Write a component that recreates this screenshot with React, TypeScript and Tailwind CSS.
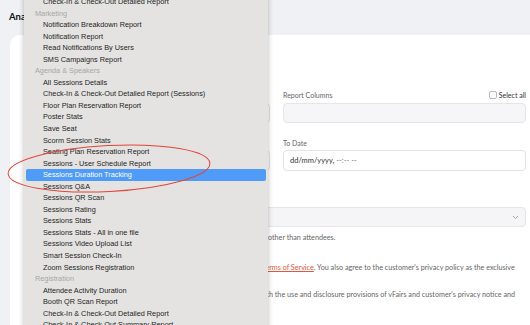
import React from "react";

type MenuRow = { label: string; header?: boolean; selected?: boolean };

const MENU_ROWS: MenuRow[] = [
  { label: "Check-In & Check-Out Detailed Report" },
  { label: "Marketing", header: true },
  { label: "Notification Breakdown Report" },
  { label: "Notification Report" },
  { label: "Read Notifications By Users" },
  { label: "SMS Campaigns Report" },
  { label: "Agenda & Speakers", header: true },
  { label: "All Sessions Details" },
  { label: "Check-In & Check-Out Detailed Report (Sessions)" },
  { label: "Floor Plan Reservation Report" },
  { label: "Poster Stats" },
  { label: "Save Seat" },
  { label: "Scorm Session Stats" },
  { label: "Seating Plan Reservation Report" },
  { label: "Sessions - User Schedule Report" },
  { label: "Sessions Duration Tracking", selected: true },
  { label: "Sessions Q&A" },
  { label: "Sessions QR Scan" },
  { label: "Sessions Rating" },
  { label: "Sessions Stats" },
  { label: "Sessions Stats - All in one file" },
  { label: "Sessions Video Upload List" },
  { label: "Smart Session Check-In" },
  { label: "Zoom Sessions Registration" },
  { label: "Registration", header: true },
  { label: "Attendee Activity Duration" },
  { label: "Booth QR Scan Report" },
  { label: "Check-In & Check-Out Detailed Report" },
  { label: "Check-In & Check-Out Summary Report" },
];

// native select popup, open over the form
function ReportMenu() {
  return (
    <div className="absolute left-[24px] top-[-4px] w-[244px] h-[340px] bg-[#e4e3e1] shadow-[0_0_5px_rgba(0,0,0,0.28)] font-['Liberation_Sans',sans-serif] text-[7.3px]">
      {MENU_ROWS.map((row, i) =>
        row.header ? (
          <div key={i} className="h-[11.55px] leading-[11.55px] pl-[11px] text-[#a7a7a5]">
            {row.label}
          </div>
        ) : (
          <div
            key={i}
            className={
              "h-[11.55px] leading-[11.55px] whitespace-nowrap " +
              (row.selected
                ? "mx-[2px] pl-[17px] rounded-[2px] bg-[#4f9bf7] text-white"
                : "pl-[19px] text-[#1f1f1f]")
            }
          >
            {row.label}
          </div>
        )
      )}
    </div>
  );
}

export default function App() {
  return (
    <div className="relative w-[530px] h-[325px] overflow-hidden bg-[#f0f1f4] font-['Lato',sans-serif]">
      <div className="h-[35px] pl-[9px] flex items-center">
        <h1 className="text-[9.5px] font-bold text-[#111]">Analytics</h1>
      </div>

      <div className="ml-[10px] h-[290px] rounded-tl-[10px] bg-white pl-[20px] pt-[55px]">
        <div className="grid grid-cols-[240px_243px] gap-x-[13px]">
          <div>
            <div className="h-[10px]" />
            <div className="mt-[3px] h-[20px] rounded-[4px] border border-[#e3e3e6] bg-white" />
          </div>
          <div>
            <div className="flex h-[10px] items-center justify-between text-[7px] leading-[10px]">
              <span className="text-[#666]">Report Columns</span>
              <label className="flex items-center gap-[2px] text-[#333]">
                <span className="h-[8px] w-[8px] rounded-[2px] border border-[#b9b9bd] bg-white" />
                Select all
              </label>
            </div>
            <div className="mt-[3px] h-[20px] rounded-[4px] border border-[#e6e6ea] bg-[#f6f6f8]" />
          </div>

          <div className="mt-[15px]">
            <div className="h-[10px]" />
            <div className="mt-[2px] h-[21px] rounded-[4px] border border-[#e3e3e6] bg-white" />
          </div>
          <div className="mt-[15px]">
            <div className="h-[10px] text-[7px] leading-[10px] text-[#666]">To Date</div>
            <div className="mt-[2px] flex h-[21px] items-center rounded-[4px] border border-[#e3e3e6] bg-white pl-[6px] text-[7.5px]">
              <span className="text-[#333]">dd/mm/yyyy,</span>
              <span className="ml-[2px] text-[#777]">--:-- --</span>
            </div>
          </div>
        </div>

        <div className="mt-[36px] flex h-[20px] w-[496px] items-center justify-end rounded-[4px] border border-[#e6e6ea] bg-[#f5f5f7] pr-[6px]">
          <svg width="7" height="5" viewBox="0 0 7 5" fill="none">
            <path d="M1 1l2.5 2.5L6 1" stroke="#9a9a9e" strokeWidth="0.9" />
          </svg>
        </div>

        <div className="text-[7.2px] leading-[10px] text-[#666] whitespace-nowrap">
          <p className="mt-[6px] pl-[238px]">other than attendees.</p>
          <p className="mt-[20px] pl-[232px]">
            <a className="text-[#e8553a] underline">Terms of Service</a>. You also agree to the customer&apos;s privacy policy as the exclusive
          </p>
          <p className="mt-[16.5px] pl-[229px]">
            with the use and disclosure provisions of vFairs and customer&apos;s privacy notice and
          </p>
        </div>
      </div>

      <ReportMenu />

      <svg className="pointer-events-none absolute left-0 top-0" width="530" height="325">
        <ellipse cx="109" cy="168.5" rx="101" ry="23" fill="none" stroke="#e5433a" strokeWidth="1" transform="rotate(-3 109 168.5)" />
      </svg>
    </div>
  );
}
